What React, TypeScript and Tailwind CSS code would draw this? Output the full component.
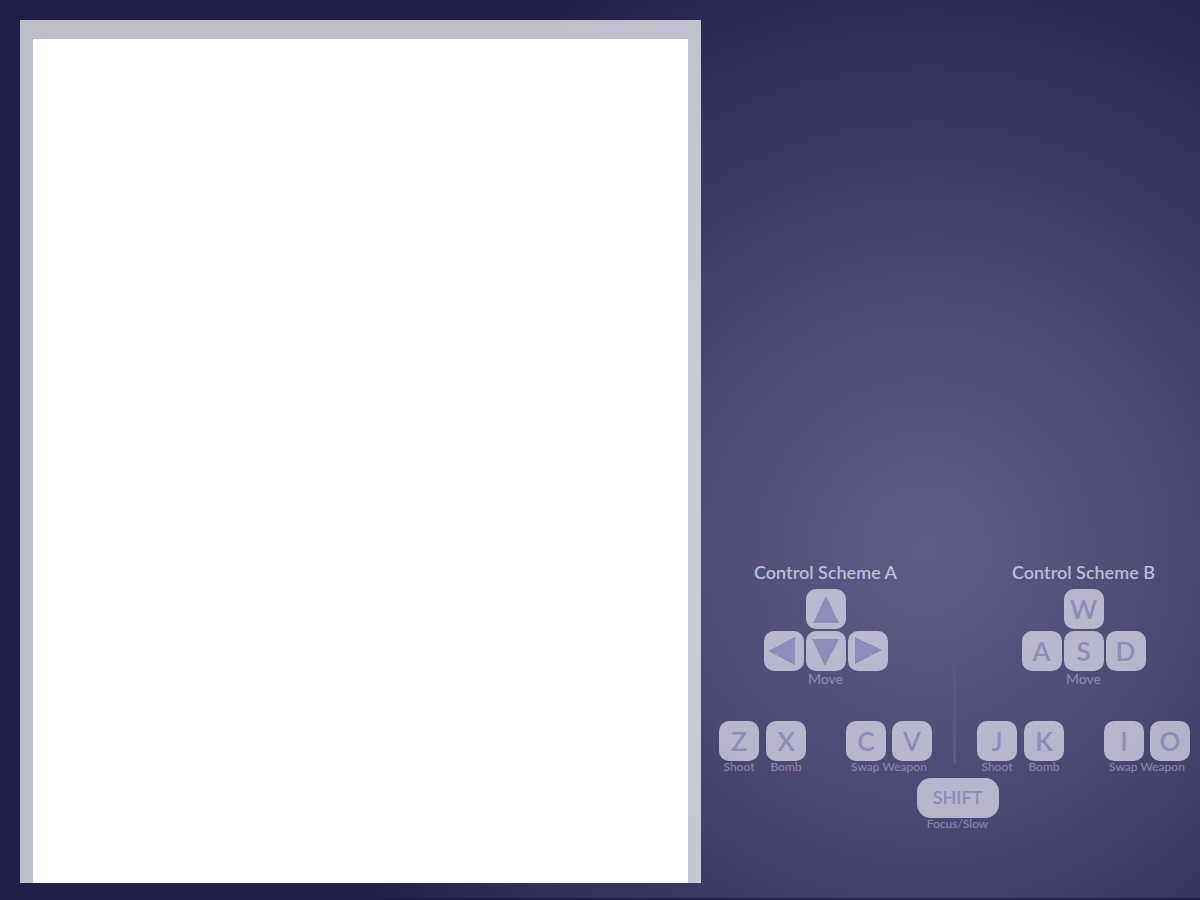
import type { ReactNode } from "react";

type Direction = "up" | "down" | "left" | "right";

const TRIANGLES: Record<Direction, string> = {
  up: "20,7 33,34 7,34",
  down: "6,8 33,8 19,35",
  left: "4,20 31,6 31,34",
  right: "7,6 34,19 7,33",
};

function Arrow({ direction }: { direction: Direction }) {
  return (
    <svg viewBox="0 0 40 40" className="size-10" role="img" aria-label={direction}>
      <polygon points={TRIANGLES[direction]} fill="#8e8cb8" shapeRendering="crispEdges" />
    </svg>
  );
}

function Key({ children }: { children: ReactNode }) {
  return (
    <kbd className="flex size-10 items-center justify-center rounded-[10px] bg-[#f2f1ff]/64 font-[Lato,sans-serif] text-[26px] leading-10 font-semibold text-[#8e8cb8]">
      {children}
    </kbd>
  );
}

function Action({ label, children }: { label: string; children: ReactNode }) {
  return (
    <div className="flex flex-col items-center">
      <div className="flex gap-[6px]">{children}</div>
      <span className="text-xs leading-3 font-medium whitespace-nowrap">{label}</span>
    </div>
  );
}

interface SchemeProps {
  title: string;
  move: [ReactNode, ReactNode, ReactNode, ReactNode];
  shoot: string;
  bomb: string;
  swap: [string, string];
}

function Scheme({ title, move, shoot, bomb, swap }: SchemeProps) {
  const [up, left, down, right] = move;
  return (
    <section className="flex flex-col items-center">
      <h2 className="pb-px text-lg leading-8 font-semibold text-[#bcbbd6]">{title}</h2>
      <div className="flex flex-col items-center gap-[2px]">
        <Key>{up}</Key>
        <div className="flex gap-[2px]">
          <Key>{left}</Key>
          <Key>{down}</Key>
          <Key>{right}</Key>
        </div>
      </div>
      <span className="text-sm leading-4 font-medium">Move</span>
      <div className="mt-[34px] flex gap-10">
        <div className="flex gap-[7px]">
          <Action label="Shoot">
            <Key>{shoot}</Key>
          </Action>
          <Action label="Bomb">
            <Key>{bomb}</Key>
          </Action>
        </div>
        <Action label="Swap Weapon">
          <Key>{swap[0]}</Key>
          <Key>{swap[1]}</Key>
        </Action>
      </div>
    </section>
  );
}

export default function App() {
  return (
    <div className="grid min-h-screen grid-cols-[681fr_499fr] border-b-2 border-[#1f1738]/40 bg-[radial-gradient(ellipse_650px_660px_at_925px_550px,#5f5d86_0%,#4a4870_42%,#2d2b55_83%,#211f48_100%)] bg-[#211f48] pt-5 pb-[15px] pl-5 font-[Lato,sans-serif] text-[#8785b0]">
      <main className="flex flex-col bg-[#fafaff]/73 px-[13px] pt-[19px]">
        <div className="grow bg-white" />
      </main>
      <aside className="flex flex-col justify-end pr-[10px] pb-[54px] pl-[18px]">
        <div className="flex justify-between">
          <Scheme
            title="Control Scheme A"
            move={[
              <Arrow direction="up" />,
              <Arrow direction="left" />,
              <Arrow direction="down" />,
              <Arrow direction="right" />,
            ]}
            shoot="Z"
            bomb="X"
            swap={["C", "V"]}
          />
          <div className="mb-[10px] h-32 w-[3px] self-end bg-linear-to-b from-[#6a6892]/0 to-[#6a6892]/50" />
          <Scheme
            title="Control Scheme B"
            move={["W", "A", "S", "D"]}
            shoot="J"
            bomb="K"
            swap={["I", "O"]}
          />
        </div>
        <div className="mt-[5px] flex flex-col items-center pl-[6px]">
          <kbd className="flex h-10 w-[82px] items-center justify-center rounded-[14px] bg-[#f2f1ff]/64 pb-[2px] font-[Lato,sans-serif] text-lg leading-9 font-semibold text-[#8e8cb8]">
            SHIFT
          </kbd>
          <span className="text-xs leading-[11px] font-medium">Focus/Slow</span>
        </div>
      </aside>
    </div>
  );
}
